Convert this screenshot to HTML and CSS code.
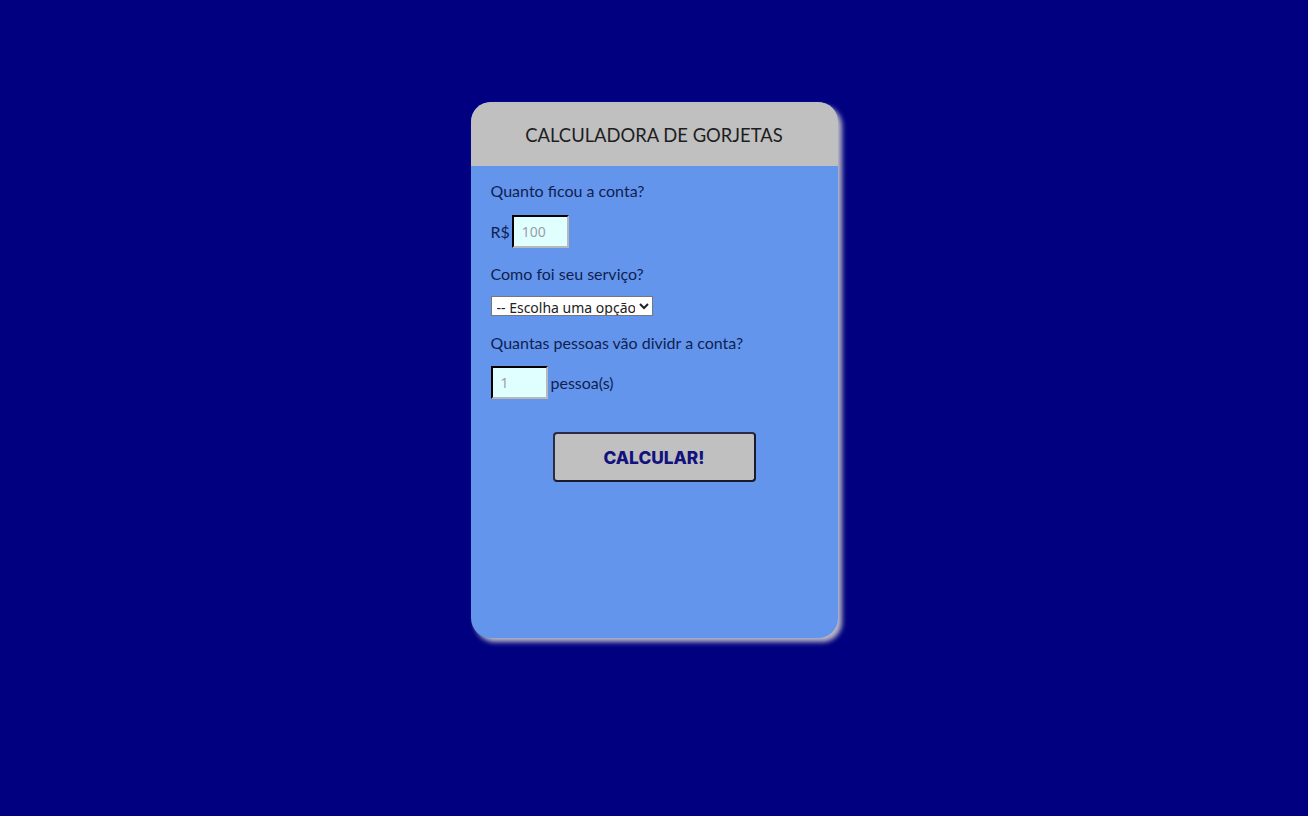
FILE: index.html
```html
<!DOCTYPE html>
<html lang="pt-BR">
<head>
<meta charset="utf-8">
<title>Calculadora de Gorjetas</title>
<link rel="stylesheet" href="styles.css">
</head>
<body>
<div class="card">
  <header class="card-header">
    <h1>CALCULADORA DE GORJETAS</h1>
  </header>
  <main class="card-body">
    <p class="label">Quanto ficou a conta?</p>
    <div class="row">
      <span class="prefix">R$</span>
      <input class="num" type="text" placeholder="100">
    </div>
    <p class="label">Como foi seu serviço?</p>
    <div class="row row-select">
      <select class="sel">
        <option>-- Escolha uma opção</option>
      </select>
    </div>
    <p class="label">Quantas pessoas vão dividr a conta?</p>
    <div class="row row-people">
      <input class="num" type="text" placeholder="1">
      <span class="suffix">pessoa(s)</span>
    </div>
    <div class="btn-wrap">
      <button class="btn" type="button">CALCULAR!</button>
    </div>
  </main>
</div>
</body>
</html>
```
FILE: styles.css
```css
html, body {
  height: 100%;
}
body {
  margin: 0;
  background: #000080;
  font-family: "Lato", "Liberation Sans", sans-serif;
  overflow: hidden;
}
.card {
  width: 367px;
  height: 536px;
  margin: 102px auto 0;
  background: #6495ed;
  border-radius: 20px;
  box-shadow: 4px 4px 5px #b8b8c8;
  overflow: hidden;
  display: flex;
  flex-direction: column;
}
.card-header {
  height: 64px;
  background: #c0c0c0;
  display: flex;
  align-items: center;
  justify-content: center;
}
.card-header h1 {
  margin: 0;
  font-size: 18.4px;
  font-weight: 400;
  color: #1e1e1e;
  padding-top: 2px;
}
.card-body {
  padding: 15px 20px 0;
  color: #0f1f50;
  font-size: 16px;
}
.label {
  margin: 0;
  line-height: 20px;
}
.row {
  display: flex;
  align-items: center;
  margin: 14px 0 16px;
}
.row-select {
  margin-top: 12px;
  margin-bottom: 17px;
}
.row-people {
  margin-top: 13px;
}
.prefix {
  margin-right: 2px;
}
.suffix {
  margin-left: 3px;
}
.num {
  width: 57px;
  height: 33px;
  box-sizing: border-box;
  background: #e0ffff;
  border: 2px inset #767676;
  border-top-color: #2a2a40;
  border-left-color: #2a2a40;
  border-right-color: #b8b8b8;
  border-bottom-color: #b8b8b8;
  padding: 0 8px;
  font-family: "Noto Sans", "Open Sans", sans-serif;
  font-size: 14px;
}
.num::placeholder {
  color: #9aa0a6;
}
.sel {
  width: 162px;
  height: 20px;
  font-family: "Noto Sans", "Open Sans", sans-serif;
  font-size: 14px;
  color: #222;
  background: #fff;
  border: 1px solid #777;
  border-radius: 0;
  padding: 0 1px;
}
.btn-wrap {
  display: flex;
  justify-content: center;
  margin-top: 33px;
}
.btn {
  width: 203px;
  height: 50px;
  background: #c0c0c0;
  border: 2px solid #1b1b2e;
  border-top-color: #2b2b45;
  border-left-color: #2b2b45;
  border-radius: 4px;
  color: #12127e;
  font-family: "Inter", "Roboto", sans-serif;
  font-weight: 800;
  font-size: 17.3px;
  padding: 0;
}
```
